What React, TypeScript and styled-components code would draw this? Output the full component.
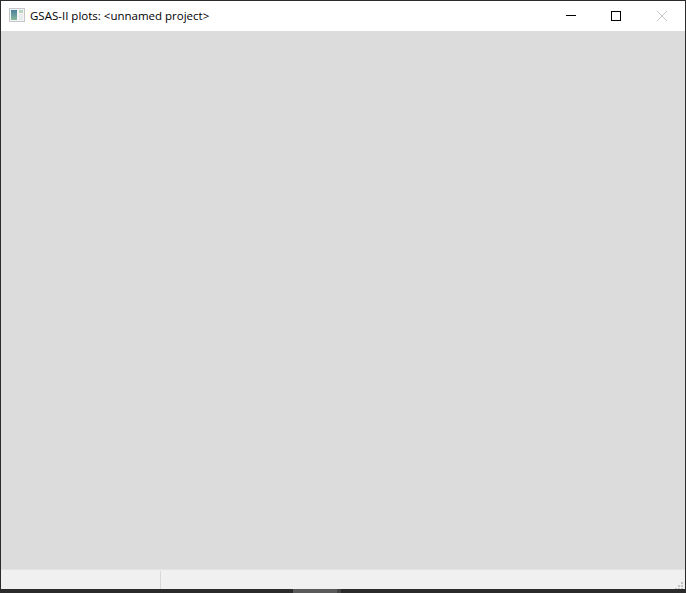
import { createGlobalStyle } from 'styled-components'
import styled from 'styled-components'

const GlobalStyle = createGlobalStyle`
  html, body {
    margin: 0;
    padding: 0;
    background: #2b2b2b;
    overflow: hidden;
  }
`

const Screen = styled.div`
  width: 686px;
  height: 593px;
  display: flex;
  flex-direction: column;
  background: #2b2b2b;
`

const Window = styled.div`
  height: 589px;
  box-sizing: border-box;
  display: flex;
  flex-direction: column;
  border: 1px solid #2b2b2b;
  border-bottom: none;
  background: #f0f0f0;
`

const TitleBar = styled.div`
  height: 30px;
  flex: none;
  display: flex;
  align-items: center;
  background: #fff;
  padding-left: 8px;
`

const TitleText = styled.span`
  margin-left: 5px;
  padding-bottom: 2px;
  font: 11.5px "Open Sans", sans-serif;
  color: #000;
  white-space: nowrap;
  flex: 1;
`

const CaptionButton = styled.div<{ $width: number }>`
  width: ${({ $width }) => $width}px;
  height: 30px;
  display: flex;
  align-items: center;
  justify-content: center;
`

const PlotArea = styled.div`
  flex: 1;
  background: #dcdcdc;
`

const StatusBar = styled.div`
  height: 18px;
  flex: none;
  display: flex;
  padding-top: 1px;
  background: #f0f0f0;
  border-top: 1px solid #e3e3e3;
`

const StatusField = styled.div<{ $width?: number }>`
  box-sizing: border-box;
  position: relative;
  ${({ $width }) => ($width ? `width: ${$width}px;` : 'flex: 1;')}
  ${({ $width }) => ($width ? 'border-right: 1px solid #d9d9d9;' : '')}
`

const Grip = styled.svg`
  position: absolute;
  right: 1px;
  bottom: 0;
`

const Taskbar = styled.div`
  flex: 1;
  display: flex;
  padding-left: 293px;
`

const TaskbarItem = styled.div<{ $width: number; $color: string }>`
  width: ${({ $width }) => $width}px;
  background: ${({ $color }) => $color};
`

const AppIcon = () => (
  <svg width="16" height="16" viewBox="0 0 16 16">
    <defs>
      <linearGradient id="plotFill" x1="0" y1="0" x2="0" y2="1">
        <stop offset="0" stopColor="#4a7f9e" />
        <stop offset="1" stopColor="#86b89a" />
      </linearGradient>
    </defs>
    <rect x="0.5" y="0.5" width="15" height="13" fill="#f4f4f4" stroke="#c4c8cb" />
    <rect x="2" y="2" width="6" height="10" fill="url(#plotFill)" />
    <rect x="10" y="2" width="4" height="3" fill="#b8d6c2" />
    <rect x="10" y="6" width="4" height="6" fill="#e8ebec" />
  </svg>
)

export default function App() {
  return (
    <Screen>
      <GlobalStyle />
      <Window>
        <TitleBar>
          <AppIcon />
          <TitleText>GSAS-II plots: &lt;unnamed project&gt;</TitleText>
          <CaptionButton $width={45}>
            <svg width="10" height="10" viewBox="0 0 10 10">
              <path d="M0 4.5H10" stroke="#000" />
            </svg>
          </CaptionButton>
          <CaptionButton $width={45}>
            <svg width="10" height="10" viewBox="0 0 10 10">
              <rect x="0.5" y="0.5" width="9" height="9" fill="none" stroke="#000" />
            </svg>
          </CaptionButton>
          <CaptionButton $width={47}>
            <svg width="10" height="10" viewBox="0 0 10 10">
              <path d="M0 0L10 10M10 0L0 10" stroke="#c8c8c8" />
            </svg>
          </CaptionButton>
        </TitleBar>
        <PlotArea />
        <StatusBar>
          <StatusField $width={160} />
          <StatusField>
            <Grip width="10" height="8" viewBox="0 0 10 8">
              <path d="M1 7h2v2H1zM4 4h2v2H4zM4 7h2v2H4zM7 1h2v2H7zM7 4h2v2H7zM7 7h2v2H7z" fill="#c4c4c4" />
            </Grip>
          </StatusField>
        </StatusBar>
      </Window>
      <Taskbar>
        <TaskbarItem $width={44} $color="#5a5a5a" />
        <TaskbarItem $width={4} $color="#444" />
      </Taskbar>
    </Screen>
  )
}
